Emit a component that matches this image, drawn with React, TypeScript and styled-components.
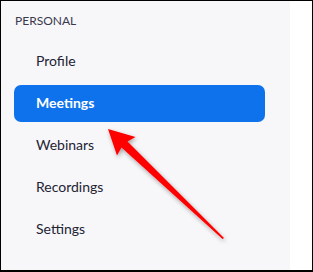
import React from "react";
import styled, { createGlobalStyle } from "styled-components";

const Global = createGlobalStyle`
  html, body { margin: 0; padding: 0; background: #ffffff; }
  body { font-family: Lato, "Open Sans", sans-serif; }
`;

const Frame = styled.div`
  position: relative;
  box-sizing: border-box;
  width: 313px;
  height: 272px;
  border: 1px solid #000;
  border-bottom-width: 2px;
  display: flex;
  background: #ffffff;
  overflow: hidden;
`;

const Sidebar = styled.aside`
  flex: 0 0 289px;
  box-sizing: border-box;
  background: #f7f7fa;
  padding: 12px 25px 0 13px;
  display: flex;
  flex-direction: column;
`;

const SectionLabel = styled.div`
  font-family: Lato, sans-serif;
  font-size: 12px;
  line-height: 15px;
  color: #39394d;
  padding-left: 1px;
  margin-bottom: 15px;
  letter-spacing: 0;
`;

const Nav = styled.nav`
  display: flex;
  flex-direction: column;
  gap: 5px;
`;

const NavItem = styled.div<{ $active?: boolean }>`
  height: 37px;
  line-height: 36px;
  padding-left: 22px;
  border-radius: 7px;
  font-family: Lato, sans-serif;
  font-size: 14px;
  font-weight: ${(p) => (p.$active ? 700 : 400)};
  color: ${(p) => (p.$active ? "#ffffff" : "#232333")};
  background: ${(p) => (p.$active ? "#0e72ed" : "transparent")};
`;

const Content = styled.main`
  flex: 1;
  background: #ffffff;
`;

const Annotation = styled.svg`
  position: absolute;
  left: -1px;
  top: -1px;
  width: 313px;
  height: 272px;
  pointer-events: none;
`;

const items = ["Profile", "Meetings", "Webinars", "Recordings", "Settings"];

export default function App() {
  return (
    <>
      <Global />
      <Frame>
        <Sidebar>
          <SectionLabel>PERSONAL</SectionLabel>
          <Nav>
            {items.map((it) => (
              <NavItem key={it} $active={it === "Meetings"}>
                {it}
              </NavItem>
            ))}
          </Nav>
        </Sidebar>
        <Content />
        <Annotation viewBox="0 0 313 272">
          <defs>
            <filter id="sh" x="-20%" y="-20%" width="140%" height="140%">
              <feDropShadow dx="1" dy="2" stdDeviation="2" floodColor="#000" floodOpacity="0.35" />
            </filter>
          </defs>
          <path
            d="M108 129 L135.5 137 L127.5 141.5 L224 238 L222.5 239 L121.5 147.5 L117 155.5 Z"
            fill="#ff0000"
            filter="url(#sh)"
          />
        </Annotation>
      </Frame>
    </>
  );
}
